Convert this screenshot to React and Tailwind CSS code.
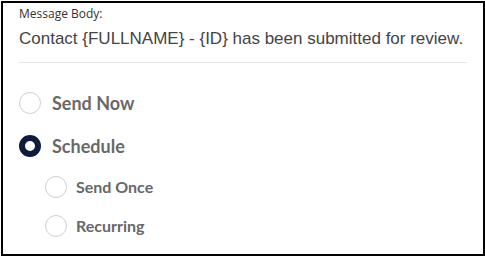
function Radio({ checked }) {
  return checked ? (
    <span className="w-[22px] h-[22px] rounded-full border-[6px] border-[#0c1c3c] bg-white shrink-0" />
  ) : (
    <span className="w-[22px] h-[22px] rounded-full border border-[#cfcfcf] bg-white shrink-0" />
  );
}

function Option({ label, checked, small }) {
  return (
    <label
      className={
        "flex items-center h-[22px] " + (small ? "gap-[9px]" : "gap-[11px]")
      }
    >
      <Radio checked={checked} />
      <span
        className={
          "font-bold text-[#686868] " + (small ? "text-[16px]" : "text-[18px]")
        }
        style={{ fontFamily: "Lato, 'Open Sans', sans-serif" }}
      >
        {label}
      </span>
    </label>
  );
}

export default function App() {
  return (
    <div className="bg-white w-[485px] h-[257px] pt-px pl-px">
      <div className="w-[484px] h-[255px] border-2 border-black pl-4 pr-4">
        <div className="pb-[11px] border-b border-[#e6e6e6]">
          <div
            className="pt-[2px] text-[12px] leading-[18px] text-[#333333]"
            style={{ fontFamily: "'Open Sans', sans-serif" }}
          >
            Message Body:
          </div>
          <div
            className="mt-[4px] text-[17px] leading-[24px] text-[#444444]"
            style={{ fontFamily: "'Liberation Sans', Arial, sans-serif" }}
          >
            {"Contact {FULLNAME} - {ID} has been submitted for review."}
          </div>
        </div>
        <div className="pt-[29px] flex flex-col">
          <Option label="Send Now" />
          <div className="mt-[21px]">
            <Option label="Schedule" checked />
          </div>
          <div className="pl-[26px] mt-[19px] flex flex-col gap-[17px]">
            <Option label="Send Once" small />
            <Option label="Recurring" small />
          </div>
        </div>
      </div>
    </div>
  );
}
